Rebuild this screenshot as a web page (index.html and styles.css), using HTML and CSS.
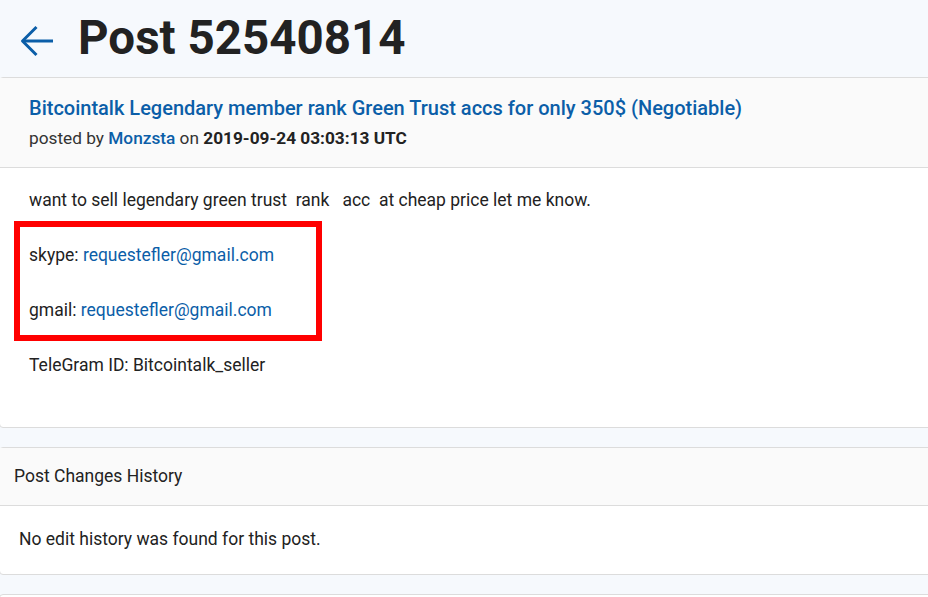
FILE: index.html
```html
<!DOCTYPE html>
<html lang="en">
<head>
<meta charset="utf-8">
<title>Post 52540814</title>
<link rel="stylesheet" href="styles.css">
</head>
<body>

<header class="page-head">
	<a class="back" href="#" aria-label="back">
		<svg width="34" height="32" viewBox="0 0 34 32" fill="none" stroke="#0b5ea8" stroke-width="3" stroke-linejoin="round">
			<path d="M33 16H3"/>
			<path d="M16.5 2L2.5 16l14 14"/>
		</svg>
	</a>
	<h1>Post 52540814</h1>
</header>

<div class="card post">
	<div class="card-head">
		<a class="topic" href="#">Bitcointalk Legendary member rank Green Trust accs for only 350$ (Negotiable)</a>
		<div class="meta">posted by <a href="#">Monzsta</a> on <b>2019-09-24 03:03:13 UTC</b></div>
	</div>
	<div class="card-body">
		<div class="post-text">
			want to sell legendary green trust&nbsp; rank &nbsp; acc&nbsp; at cheap price let me know.<br><br>
			skype: <a href="#">requestefler@gmail.com</a><br><br>
			gmail: <a href="#">requestefler@gmail.com</a><br><br>
			TeleGram ID: Bitcointalk_seller
		</div>
		<div class="mark"></div>
	</div>
</div>

<div class="card history">
	<div class="card-head">Post Changes History</div>
	<div class="card-body">No edit history was found for this post.</div>
</div>

<div class="card next"></div>

</body>
</html>
```

FILE: styles.css
```css
html, body { overflow-x: hidden; }

body {
	margin: 0;
	background: #f6f9fd;
	font-family: Roboto, "Liberation Sans", sans-serif;
	font-size: 17.5px;
	line-height: 24px;
	color: #222;
}

a { color: #0b5ea8; text-decoration: none; }

.page-head {
	display: flex;
	align-items: center;
	height: 77px;
	padding-left: 20px;
}
.back { display: flex; margin-top: 5px; }
.page-head h1 {
	margin: 0 0 2px 24px;
	font-size: 47.5px;
	font-weight: 700;
	line-height: 56px;
	color: #222;
}

.card {
	background: #fff;
	border: 1px solid #dcdcdc;
	border-radius: 4px;
	margin: 0 -4px 19px -1px;
}
.card-head {
	background: #fafafa;
	border-bottom: 1px solid #dcdcdc;
}

/* post */
.post .card-head { padding: 18px 29px; }
.topic {
	display: block;
	font-size: 20px;
	font-weight: 500;
	margin-bottom: 5px;
}
.meta { color: #333; font-size: 17.25px; position: relative; top: 1px; }
.meta a { font-weight: 500; }
.meta b { color: #222; font-weight: 700; }

.post .card-body {
	position: relative;
	padding: 19px 29px 47px;
}
.post-text { line-height: 27.5px; }

/* red annotation box over the contact lines */
.mark {
	position: absolute;
	left: 14px;
	top: 53px;
	width: 296px;
	height: 108px;
	border: 6px solid #ff0000;
}

/* history */
.history .card-head { padding: 16px 14px 17px; }
.history .card-body { padding: 21px 19px 23px; }

.next { height: 40px; margin-bottom: 0; }
```
